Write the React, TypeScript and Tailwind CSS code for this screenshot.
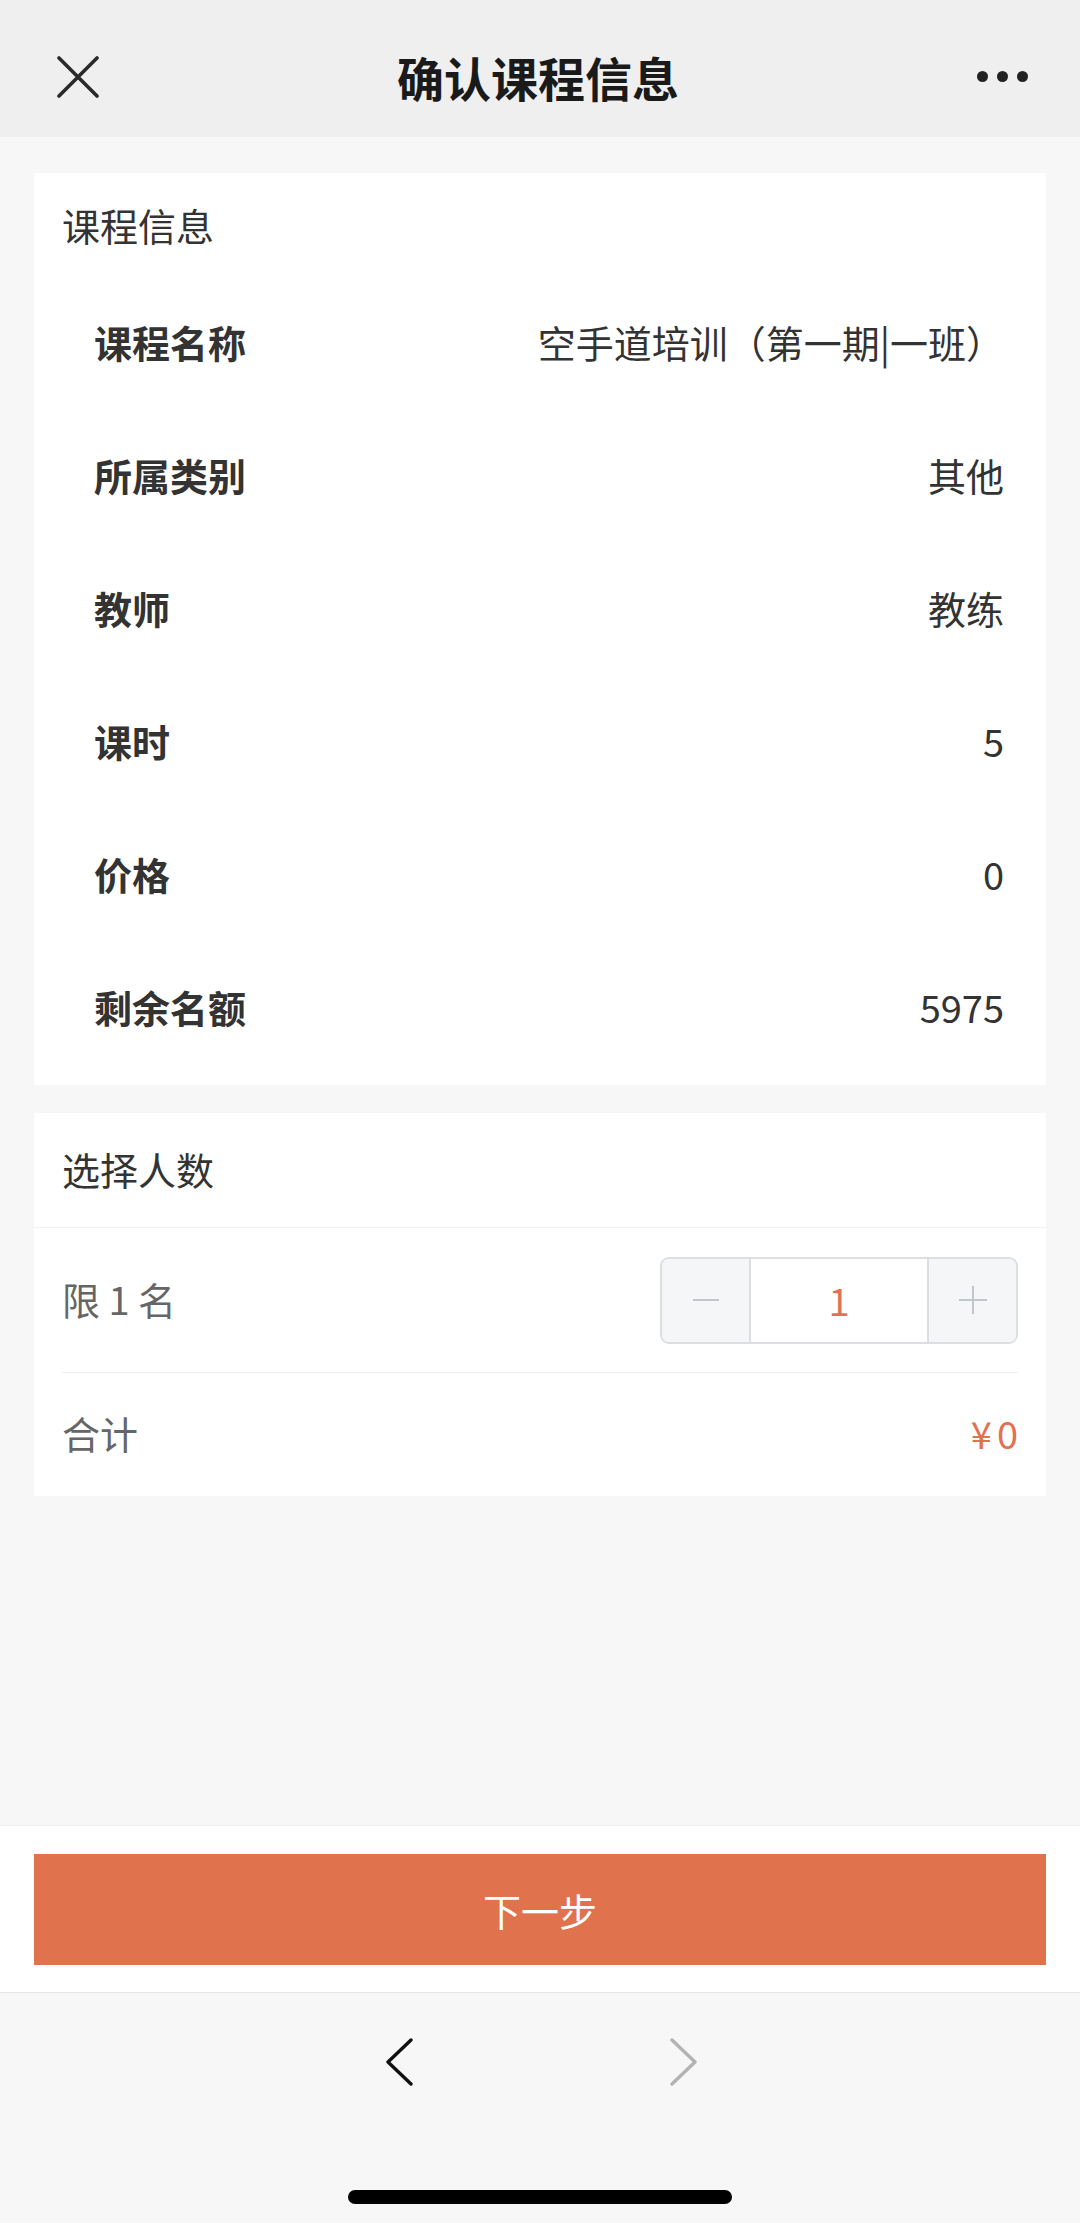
import React from 'react';

const rows = [
  { label: '课程名称', value: '空手道培训（第一期|一班）' },
  { label: '所属类别', value: '其他' },
  { label: '教师', value: '教练' },
  { label: '课时', value: '5' },
  { label: '价格', value: '0' },
  { label: '剩余名额', value: '5975' },
];

const App = () => {
  return (
    <div className="flex h-[2223px] w-[1080px] flex-col bg-[#f7f7f7] font-['Noto_Sans_CJK_SC','Noto_Sans',sans-serif] text-[#333]">
      {/* nav bar */}
      <div className="flex h-[137px] shrink-0 items-center justify-between bg-[#efefef] pl-[57px] pr-[52px] pt-[16px]">
        <svg width="42" height="42" viewBox="0 0 42 42" className="text-[#2a2a2a]">
          <path d="M2 2 L40 40 M40 2 L2 40" stroke="currentColor" strokeWidth="3.6" strokeLinecap="round" />
        </svg>
        <div className="text-[47px] font-bold leading-none text-[#1a1a1a]">确认课程信息</div>
        <div className="flex items-center gap-[9px]">
          <span className="h-[11px] w-[11px] rounded-full bg-[#222]" />
          <span className="h-[11px] w-[11px] rounded-full bg-[#222]" />
          <span className="h-[11px] w-[11px] rounded-full bg-[#222]" />
        </div>
      </div>

      <div className="flex flex-1 flex-col gap-[28px] px-[34px] pt-[36px]">
        {/* course info */}
        <div className="bg-white pb-[10px]">
          <div className="flex h-[104px] items-center px-[28px] text-[38px] leading-none text-[#333]">课程信息</div>
          {rows.map((row) => (
            <div key={row.label} className="flex h-[133px] items-center justify-between pb-[3px] pl-[60px] pr-[42px] text-[38px] leading-none">
              <span className="font-semibold text-[#333]">{row.label}</span>
              <span className="text-[#333]">{row.value}</span>
            </div>
          ))}
        </div>

        {/* people */}
        <div className="bg-white">
          <div className="flex h-[115px] items-center border-b border-[#f2f2f2] px-[28px] pb-[3px] text-[38px] leading-none text-[#333]">选择人数</div>
          <div className="mx-[28px] flex h-[145px] items-center justify-between border-b border-[#eeeeee]">
            <span className="pb-[2px] text-[38px] leading-none text-[#666]">限 1 名</span>
            <div className="flex h-[87px] w-[358px] overflow-hidden rounded-[9px] border-2 border-[#dcdee2]">
              <div className="flex w-[87px] items-center justify-center bg-[#f5f6f8]">
                <svg width="28" height="28" viewBox="0 0 28 28">
                  <path d="M1 14 H27" stroke="#c3c6cc" strokeWidth="2" />
                </svg>
              </div>
              <div className="flex flex-1 items-center justify-center border-x-2 border-[#dcdee2] text-[38px] leading-none text-[#e0734f]">1</div>
              <div className="flex w-[87px] items-center justify-center bg-[#f5f6f8]">
                <svg width="30" height="30" viewBox="0 0 30 30">
                  <path d="M1 15 H29 M15 1 V29" stroke="#c3c6cc" strokeWidth="2" />
                </svg>
              </div>
            </div>
          </div>
          <div className="mx-[28px] flex h-[123px] items-center justify-between pb-[3px] text-[38px] leading-none">
            <span className="text-[#666]">合计</span>
            <span className="text-[#e0734f]">
              ¥<span className="ml-[5px]">0</span>
            </span>
          </div>
        </div>
      </div>

      {/* action bar */}
      <div className="flex h-[167px] shrink-0 flex-col border-t border-[#eeeeee] bg-white px-[34px] pt-[28px]">
        <button className="flex h-[111px] w-full items-center justify-center bg-[#e0734e] text-[38px] leading-none text-white">
          下一步
        </button>
      </div>

      {/* browser toolbar */}
      <div className="flex h-[231px] shrink-0 flex-col items-center border-t border-[#e6e6e6] bg-[#f7f7f7]">
        <div className="mt-[45px] flex items-center gap-[255px] pl-[2px]">
          <svg width="30" height="48" viewBox="0 0 30 48">
            <path d="M27 2 L4 24 L27 46" fill="none" stroke="#111" strokeWidth="3.4" strokeLinecap="round" strokeLinejoin="round" />
          </svg>
          <svg width="30" height="48" viewBox="0 0 30 48">
            <path d="M3 2 L26 24 L3 46" fill="none" stroke="#b3b3b3" strokeWidth="3.4" strokeLinecap="round" strokeLinejoin="round" />
          </svg>
        </div>
        <div className="mt-[104px] h-[14px] w-[384px] rounded-full bg-black" />
      </div>
    </div>
  );
};

export default App;
